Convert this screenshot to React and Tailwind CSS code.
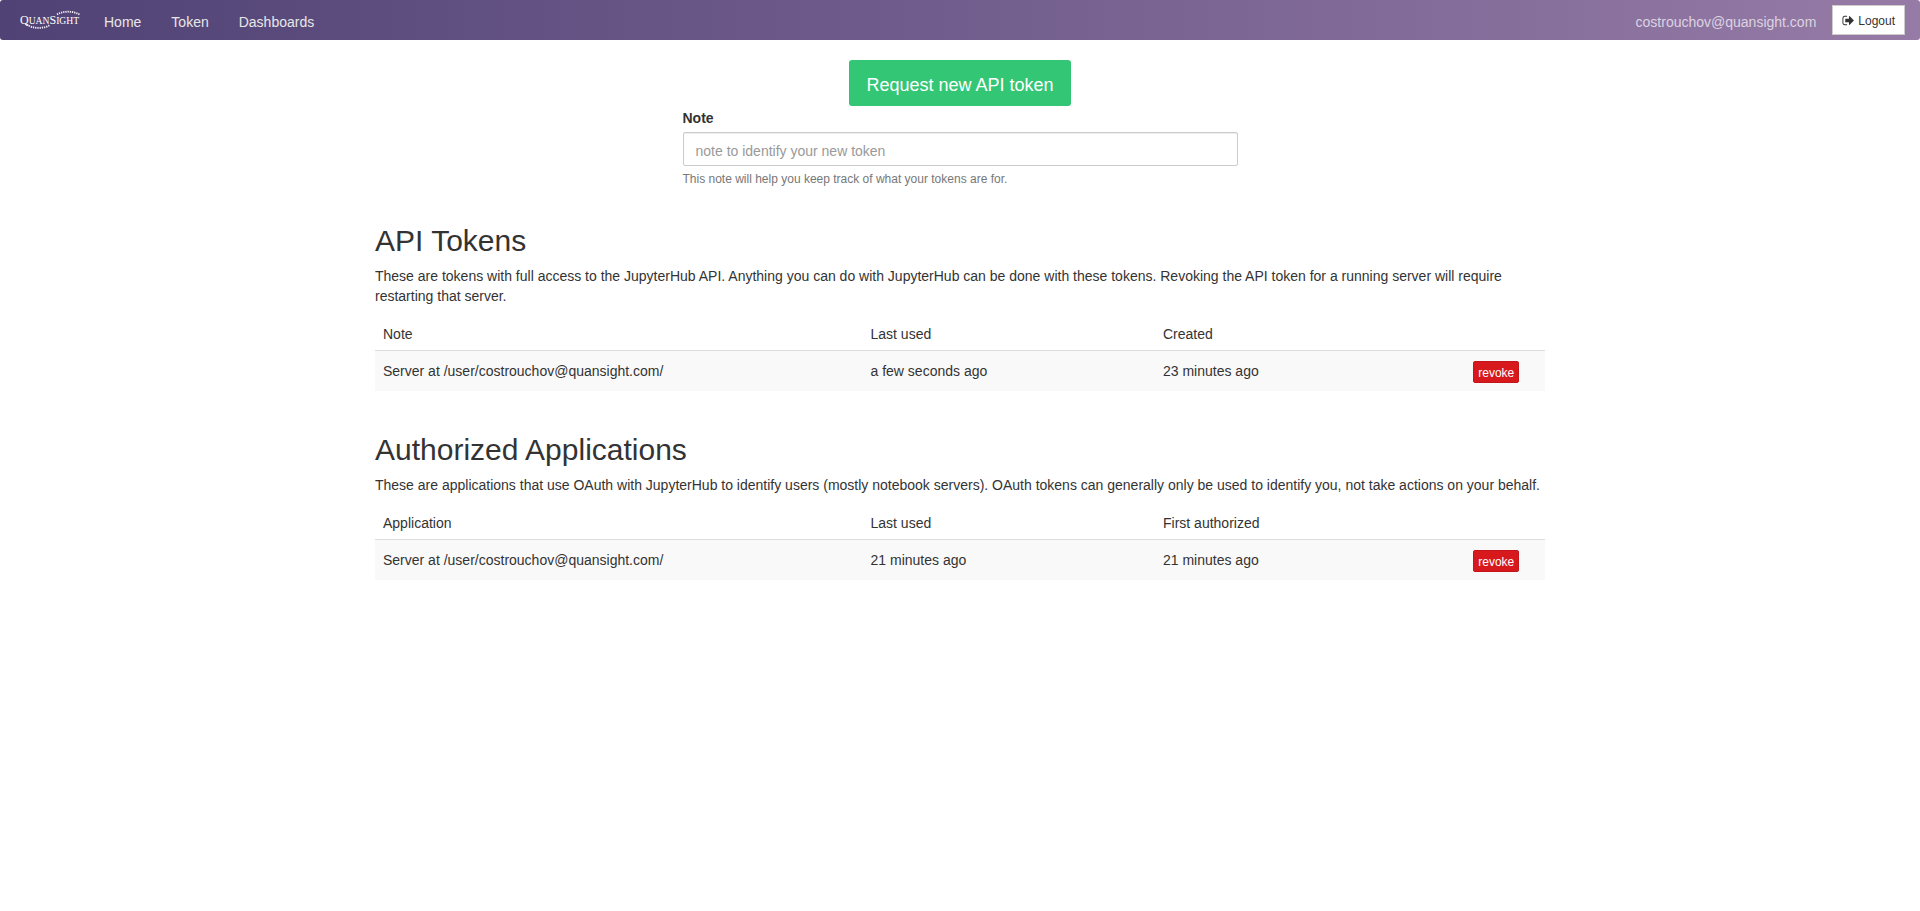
import React from "react";

const navLinks = ["Home", "Token", "Dashboards"];

function Logo() {
  return (
    <svg className="h-5 w-[62px]" viewBox="0 0 62 20" role="img" aria-label="QuanSight">
      <g fill="#ffffff" fontFamily="'Liberation Serif', serif">
        <text x="0" y="14" fontSize="12">Q<tspan fontSize="9.6">UAN</tspan>S<tspan fontSize="9.6">IGHT</tspan></text>
      </g>
      <g fill="none" stroke="#f0ecf5" strokeWidth="1.8" strokeDasharray="1.3 0.9">
        <path d="M37 4.500C43 0.800 53 0.800 59.500 4.500" />
        <path d="M7 14.500C12 18.800 24 19 30 15" />
      </g>
    </svg>
  );
}

function SignOutIcon() {
  return (
    <svg className="size-[13px]" viewBox="0 0 1792 1792" fill="currentColor" aria-hidden="true">
      <path d="M704 1440q0 4 1 20t.5 26.5-3 23.5-10 19.5-20.5 6.5h-320q-119 0-203.500-84.500t-84.500-203.500v-704q0-119 84.500-203.500t203.500-84.500h320q13 0 22.500 9.500t9.500 22.500q0 4 1 20t.5 26.500-3 23.500-10 19.500-20.500 6.500h-320q-66 0-113 47t-47 113v704q0 66 47 113t113 47h312l11.500 1 11.500 3 8 5.500 7 9 2 13.500zm928-544q0 26-19 45l-544 544q-19 19-45 19t-45-19-19-45v-288h-448q-26 0-45-19t-19-45v-384q0-26 19-45t45-19h448v-288q0-26 19-45t45-19 45 19l544 544q19 19 19 45z" />
    </svg>
  );
}

function NavBar() {
  return (
    <nav className="flex h-10 items-center rounded-[3px] bg-linear-to-r from-[#504275] to-[#967ba6] pr-[15px] pl-5 text-[#e7e7e7]">
      <a href="#home" className="mr-[7px]"><Logo /></a>
      <ul className="flex pt-1">
        {navLinks.map((label) => (
          <li key={label}>
            <a href={"#" + label.toLowerCase()} className="block px-[15px]">{label}</a>
          </li>
        ))}
      </ul>
      <div className="ml-auto flex items-center gap-4">
        <span className="pt-1 text-[#dcd3e2]">costrouchov@quansight.com</span>
        <button type="button" className="flex h-[30px] items-center gap-[3px] border border-[#cccccc] bg-white px-[9px] pt-px text-xs text-[#333333]">
          <SignOutIcon />
          Logout
        </button>
      </div>
    </nav>
  );
}

function TokenTable({ title, description, headers, row }) {
  return (
    <section>
      <h2 className="mb-1.5 text-[30px] leading-[38px]">{title}</h2>
      <p className="mb-2">{description}</p>
      <table className="w-full table-fixed text-left">
        <thead>
          <tr className="h-9 border-b border-[#dddddd]">
            <th scope="col" className="w-5/12 px-2 pt-1 font-normal">{headers[0]}</th>
            <th scope="col" className="w-3/12 px-2 pt-1 font-normal">{headers[1]}</th>
            <th scope="col" className="w-3/12 px-2 pt-1 font-normal">{headers[2]}</th>
            <td className="w-1/12" />
          </tr>
        </thead>
        <tbody>
          <tr className="h-[41px] bg-[#f9f9f9]">
            {row.map((cell, i) => (
              <td key={i} className="px-2">{cell}</td>
            ))}
            <td className="px-2 pt-0.5">
              <button type="button" className="mx-auto block h-[22px] rounded-[2px] border border-[#c4161a] bg-[#d7191e] px-1 pt-px text-xs leading-5 text-white">revoke</button>
            </td>
          </tr>
        </tbody>
      </table>
    </section>
  );
}

export default function App() {
  return (
    <div className="min-h-screen bg-white font-['Liberation_Sans',Arial,sans-serif] text-sm leading-5 text-[#333333]">
      <NavBar />
      <main className="mx-auto flex max-w-[1170px] flex-col pt-5">
        <form className="mx-auto flex w-full max-w-[555px] flex-col" onSubmit={(e) => e.preventDefault()}>
          <button type="submit" className="h-[46px] self-center rounded-[3px] bg-[#33c674] px-[17px] pt-1 text-lg text-white">Request new API token</button>
          <label htmlFor="token-note" className="mt-0.5 mb-1 font-bold">Note</label>
          <input id="token-note" type="text" placeholder="note to identify your new token" className="h-[34px] rounded-[2px] border border-[#cccccc] px-3 pt-1 shadow-[inset_0_1px_1px_rgba(0,0,0,0.075)] placeholder:text-[#999999]" />
          <small className="mt-[3px] text-xs leading-5 text-[#777777]">This note will help you keep track of what your tokens are for.</small>
        </form>
        <div className="mt-[33px] flex flex-col gap-10">
          <TokenTable
            title="API Tokens"
            description="These are tokens with full access to the JupyterHub API. Anything you can do with JupyterHub can be done with these tokens. Revoking the API token for a running server will require restarting that server."
            headers={["Note", "Last used", "Created"]}
            row={["Server at /user/costrouchov@quansight.com/", "a few seconds ago", "23 minutes ago"]}
          />
          <TokenTable
            title="Authorized Applications"
            description="These are applications that use OAuth with JupyterHub to identify users (mostly notebook servers). OAuth tokens can generally only be used to identify you, not take actions on your behalf."
            headers={["Application", "Last used", "First authorized"]}
            row={["Server at /user/costrouchov@quansight.com/", "21 minutes ago", "21 minutes ago"]}
          />
        </div>
      </main>
    </div>
  );
}
